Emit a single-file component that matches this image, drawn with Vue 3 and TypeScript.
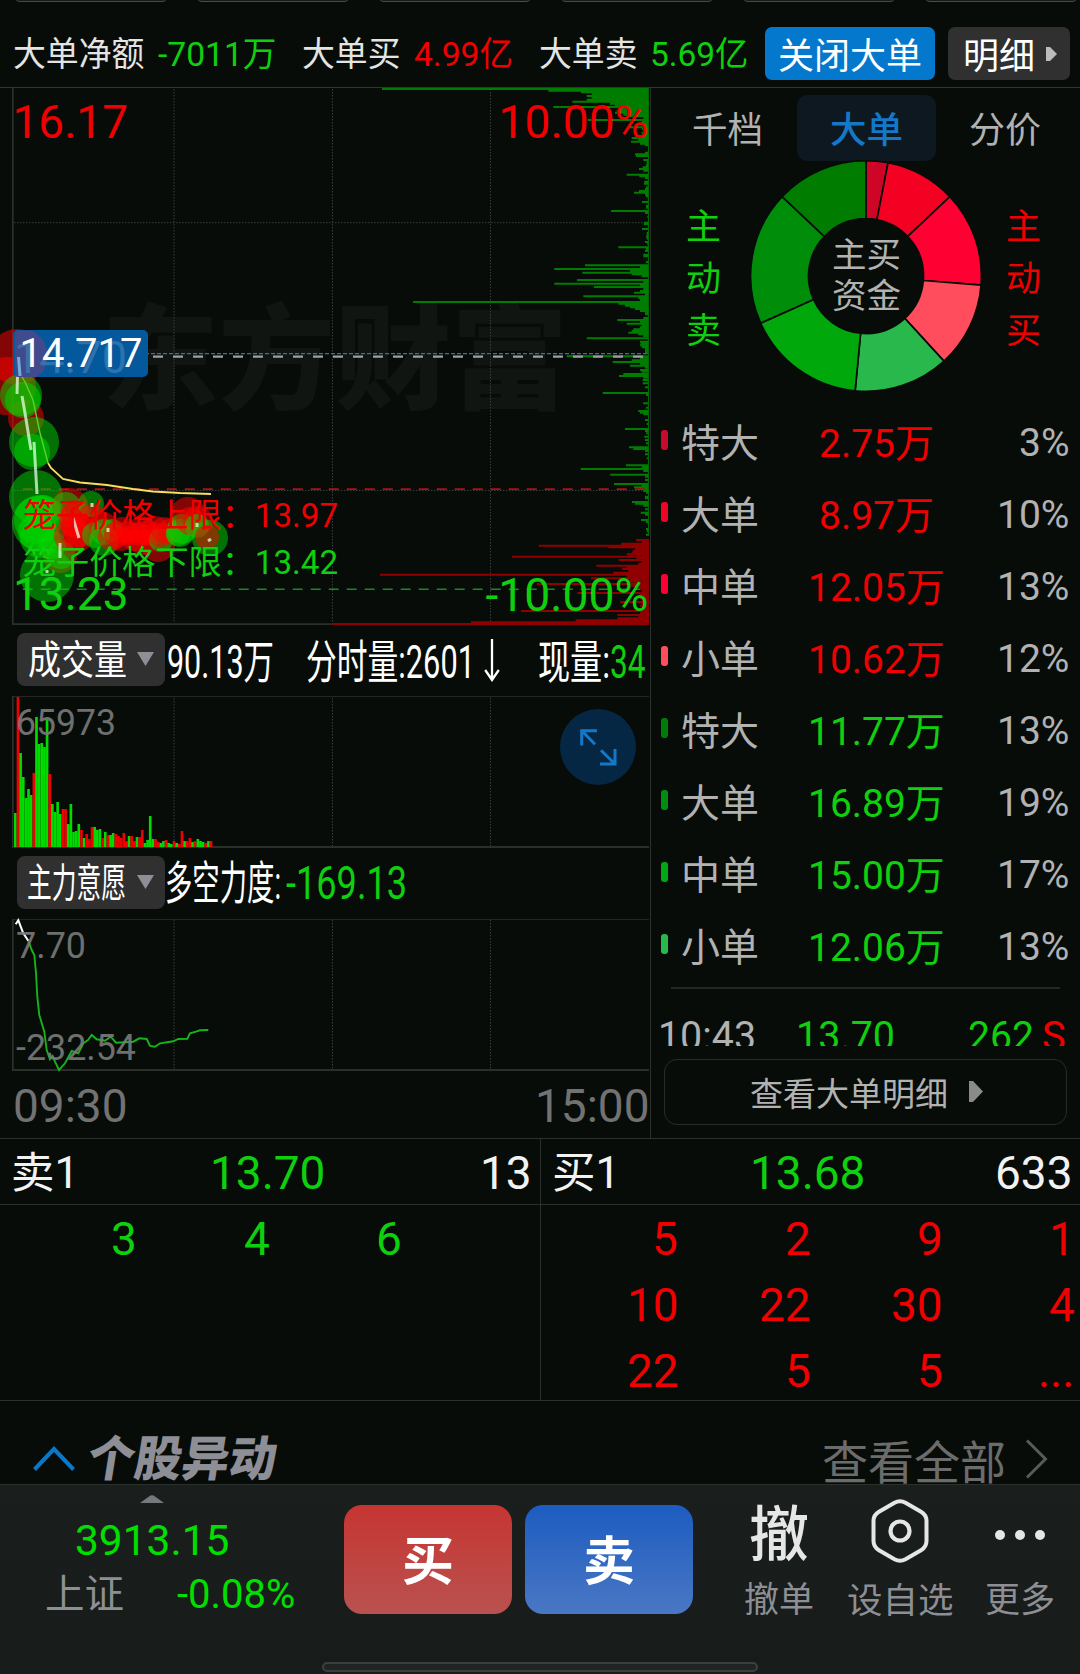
<script setup lang="ts">
import { h, type FunctionalComponent } from 'vue'

interface LabelProps { t: string; s: number; w?: number; c?: string; b?: number }

const ADVANCE: Record<string, number> = { '.': 0.263, ':': 0.242, '%': 0.733, '-': 0.276, S: 0.593 }

function advance(text: string): number {
  let sum = 0
  for (const ch of text) {
    if (ch >= '0' && ch <= '9') sum += 0.5615
    else sum += ADVANCE[ch] ?? 1
  }
  return sum
}

// One line of text whose box ends at the baseline and whose run is fitted to a fixed width.
const Label: FunctionalComponent<LabelProps> = (p) => {
  const width = p.w ?? advance(p.t) * p.s
  return h('svg', { width, height: p.s, style: 'overflow:visible;display:block;flex:none' }, [
    h('text', {
      x: 0, y: p.s, 'font-size': p.s, fill: p.c ?? '#e4e4e4', 'font-weight': p.b ?? 400,
      textLength: width, lengthAdjust: 'spacingAndGlyphs',
    }, p.t),
  ])
}
Label.props = ['t', 's', 'w', 'c', 'b']

const RED = '#f00000'
const GREEN = '#0fd00f'
const GREY = '#b2b2b2'

type Pair = [number, number]
// [y, left edge] of the order-book depth bars; every bar ends at x = 649
const third = (list: number[], oy: number): Pair[] => {
  const out: Pair[] = []
  for (let i = 0; i < list.length; i += 2) out.push([oy + list[i] / 3, 330 + list[i + 1] / 3])
  return out
}
const sellDepth: Pair[] = [
  ...third([27, 156, 32, 655, 37, 753, 42, 785, 48, 770, 53, 785, 59, 770, 65, 727, 71, 840, 76, 855, 81, 670, 87, 870, 93, 860, 98, 855, 104, 880, 109, 900, 114, 940, 120, 773, 125, 935, 131, 930, 136, 945, 142, 900, 147, 935, 153, 940, 158, 935, 164, 938, 169, 915, 174, 905, 180, 925, 185, 903, 191, 930, 196, 945, 218, 945, 223, 915, 228, 918, 240, 940, 245, 950, 251, 950, 256, 948, 262, 938, 267, 927, 272, 940, 284, 890, 289, 928, 294, 945, 305, 943, 311, 942, 322, 948, 327, 945, 333, 927, 338, 912, 344, 945, 349, 948, 366, 936, 377, 948, 383, 948, 393, 843, 399, 945, 410, 952, 428, 942, 432, 942, 447, 936, 458, 950, 464, 950, 470, 948, 476, 950, 486, 945, 492, 952, 502, 865, 508, 948, 513, 945, 524, 940, 529, 940, 546, 948, 556, 765, 562, 930, 567, 673, 573, 900, 578, 757, 583, 905, 589, 935, 600, 741, 606, 940, 611, 673, 616, 930, 621, 792, 627, 940, 633, 930, 638, 912, 644, 945, 649, 760, 655, 925, 660, 930, 666, 249, 671, 865, 677, 885, 682, 900, 687, 915, 693, 930, 698, 945, 703, 945, 714, 940, 720, 862, 726, 930, 731, 890, 737, 935, 742, 930, 748, 910, 753, 905, 758, 895, 763, 925, 768, 940, 775, 770, 785, 930, 790, 932, 796, 930, 802, 935, 808, 945, 813, 945, 819, 945, 829, 710], 80),
  ...third([25, 930, 31, 905, 36, 848, 42, 930, 47, 900, 53, 945, 60, 930, 65, 935, 72, 880, 78, 867, 83, 940, 90, 938, 100, 938, 112, 945, 129, 818, 135, 948, 160, 940, 173, 948, 183, 925, 188, 930, 193, 940, 210, 945, 222, 950, 237, 885, 243, 945, 250, 948, 260, 943, 270, 945, 280, 948, 292, 897, 297, 910, 303, 945, 313, 945, 325, 950, 346, 888, 351, 935, 357, 752, 363, 940, 374, 841, 380, 945, 390, 945, 402, 852, 407, 935, 412, 912, 417, 930, 423, 940, 428, 948, 440, 945, 445, 945, 456, 906, 461, 915, 467, 940, 478, 945, 488, 932, 494, 945, 510, 933, 516, 948, 537, 948, 543, 950, 554, 948], 350),
]
const buyDepth = third([570, 918, 581, 873, 587, 626, 592, 835, 597, 915, 603, 908, 608, 905, 613, 890, 620, 546, 625, 920, 630, 866, 636, 935, 641, 925, 647, 799, 652, 890, 657, 876, 663, 895, 668, 850, 674, 150, 679, 890, 685, 783, 690, 900, 695, 890, 702, 620, 707, 900, 712, 920, 718, 930, 729, 742, 735, 930, 740, 935, 745, 930, 756, 870, 762, 935, 767, 930, 783, 573, 789, 930, 795, 862, 800, 925, 805, 862, 811, 737, 817, 423, 822, 7], 350)
const depthPath = (list: Pair[]) => list.map(([y, x]) => `M${x.toFixed(1)} ${y.toFixed(1)}H649`).join('')

// Large-order bubbles: cx, cy, r, side
const bubbles: [number, number, number, string][] = [
  [17, 357, 28, 'r'], [7, 386, 29, 'r'], [26, 418, 18, 'r'], [21, 395, 21, 'g'], [23, 400, 18, 'g'],
  [34, 442, 25, 'g'], [32, 452, 18, 'g'], [36, 497, 27, 'g'], [60, 556, 17, 'r'], [40, 523, 28, 'g'], [38, 520, 24, 'g'],
  [40, 538, 20, 'g'], [43, 512, 17, 'g'], [36, 532, 18, 'g'], [47, 575, 27, 'g'], [61, 555, 14, 'g'],
  [52, 545, 14, 'g'], [70, 506, 18, 'r'], [66, 507, 15, 'g'], [71, 536, 17, 'r'], [77, 520, 18, 'r'],
  [80, 531, 16, 'r'], [75, 514, 14, 'r'], [78, 537, 15, 'r'], [73, 525, 12, 'r'], [91, 504, 13, 'g'], [92, 518, 14, 'r'],
  [95, 535, 13, 'g'], [104, 541, 15, 'g'], [103, 526, 14, 'r'], [104, 532, 13, 'g'], [112, 537, 14, 'r'], [112, 530, 11, 'g'],
  [121, 539, 12, 'r'], [122, 530, 13, 'r'], [117, 534, 13, 'r'], [128, 533, 12, 'r'], [135, 537, 14, 'r'], [142, 530, 14, 'r'],
  [143, 540, 15, 'r'], [138, 534, 12, 'r'], [148, 533, 13, 'r'], [155, 530, 14, 'r'], [158, 545, 17, 'r'], [161, 540, 12, 'g'],
  [164, 530, 13, 'r'], [160, 535, 12, 'r'], [171, 531, 13, 'r'], [188, 515, 18, 'r'], [180, 533, 14, 'g'], [182, 529, 15, 'g'],
  [178, 534, 12, 'g'], [190, 521, 14, 'r'], [198, 521, 15, 'r'], [197, 526, 12, 'g'], [210, 538, 18, 'g'], [207, 537, 12, 'r'],
]

// Minute volume: side + height, bars 2.64 px apart
const volume = 'g34 r150 g94 g70 g49 g58 g52 r74 g130 g103 g104 g100 g127 r73 g43 g35 g45 g33 r38 r38 g23 g43 g15 g16 g23 r17 g9 r13 r8 r20 g20 g17 g18 r9 g15 r12 g12 g14 r13 r11 r9 r14 r6 g11 r11 r6 g10 r10 r17 g4 g7 g31 g8 r8 r5 g4 g6 r7 g4 g3 r6 g4 r3 r16 g6 r6 r9 g5 r6 g8 g6 g5 r4 g6 r6'
  .split(' ').map((v, i) => ({ x: 14 + i * 2.645, up: v[0] === 'r', n: Number(v.slice(1)) }))

const slices: [number, number, string][] = [
  [0, 11, '#cf0528'], [11, 46.6, '#f40022'], [46.6, 94.5, '#ff0033'], [94.5, 137.5, '#ff4d5e'],
  [137.5, 185.4, '#28b84c'], [185.4, 245.9, '#00a80c'], [245.9, 313.4, '#008e0a'], [313.4, 360, '#007d00'],
]
const polar = (a: number, r: number) => {
  const t = (a * Math.PI) / 180
  return `${(116 + r * Math.sin(t)).toFixed(2)} ${(116 - r * Math.cos(t)).toFixed(2)}`
}
const slicePath = (a: number, b: number) =>
  `M${polar(a, 57.5)}L${polar(a, 115.4)}A115.4 115.4 0 0 1 ${polar(b, 115.4)}L${polar(b, 57.5)}A57.5 57.5 0 0 0 ${polar(a, 57.5)}Z`

const orders = [
  { n: '特大', v: '2.75万', p: '3%', m: '#c90a2c', c: RED },
  { n: '大单', v: '8.97万', p: '10%', m: '#f00525', c: RED },
  { n: '中单', v: '12.05万', p: '13%', m: '#ff0033', c: RED },
  { n: '小单', v: '10.62万', p: '12%', m: '#ff4d5e', c: RED },
  { n: '特大', v: '11.77万', p: '13%', m: '#007d08', c: GREEN },
  { n: '大单', v: '16.89万', p: '19%', m: '#008e12', c: GREEN },
  { n: '中单', v: '15.00万', p: '17%', m: '#00a814', c: GREEN },
  { n: '小单', v: '12.06万', p: '13%', m: '#28b84c', c: GREEN },
]
const quotes = [
  { name: '卖1', price: '13.70', qty: '13', c: GREEN, rows: [['3', '4', '6', '']] },
  { name: '买1', price: '13.68', qty: '633', c: RED, rows: [['5', '2', '9', '1'], ['10', '22', '30', '4'], ['22', '5', '5', '...']] },
]
const grid = [174, 332.5, 490.5]
</script>

<template>
  <div class="app">
    <div class="pills"><i v-for="n in 6" :key="n"></i></div>

    <header class="summary">
      <Label t="大单净额" :s="34" :w="131.5" />
      <Label class="near" t="-7011万" :s="34" :w="118.5" :c="GREEN" />
      <Label class="far" t="大单买" :s="34" :w="98.5" />
      <Label class="near" t="4.99亿" :s="34" :w="99" :c="RED" />
      <Label class="far" t="大单卖" :s="34" :w="98.5" />
      <Label class="near" t="5.69亿" :s="34" :w="98.5" :c="GREEN" />
      <button class="btn close"><Label t="关闭大单" :s="36" :w="144" c="#fff" /></button>
      <button class="btn detail">
        <Label t="明细" :s="36" :w="72" c="#fff" />
        <svg width="11" height="14" class="tri"><path d="M0 0L4 0L11 7L4 14H0Z" fill="#bcbcbc" /></svg>
      </button>
    </header>

    <main class="body">
      <section class="charts">
        <svg class="plot" width="650" height="538" viewBox="0 88 650 538">
          <text x="102" y="400" font-size="114" font-weight="900" fill="#101511" textLength="466" lengthAdjust="spacingAndGlyphs">东方财富</text>
          <path :d="grid.map((x) => `M${x} 89V623`).join('') + 'M14 222.7H648M14 490.5H648'" class="dots" />
          <path d="M12.8 88V624.2H649" class="axis" />
          <path :d="depthPath(sellDepth)" stroke="#007c00" stroke-width="2" />
          <path d="M648.5 88V536" stroke="#006a05" />
          <path d="M642 541H649V624H642Z" fill="#900000" />
          <path :d="depthPath(buyDepth)" stroke="#900000" stroke-width="2" />
          <path d="M13 353.6H648" stroke="#3a6f9e" stroke-width="1.2" stroke-dasharray="4 2" />
          <path d="M153 356.6H644" stroke="#a0a0a0" stroke-width="2.4" stroke-dasharray="10 10" />
          <path d="M22.7 489.2H648" stroke="#b01010" stroke-width="1.8" stroke-dasharray="10 8" />
          <path d="M22.7 589.3H640" stroke="#138c20" stroke-width="1.6" stroke-dasharray="10 8" />
          <circle v-for="(b, i) in bubbles" :key="i" :cx="b[0]" :cy="b[1]" :r="b[2]" :fill="b[3] === 'r' ? '#ff0000' : '#00d800'" fill-opacity=".5" />
          <path d="M18 357L17 394M22 396L25 413L31 450M34 442L37 494M60 543V558M47 570V573M73 518L79 538M92 503V507M108 528V532M197 523V527M208 541L211 539" class="price" />
          <path d="M19 372L25 382L33 400L40 433L48 463" stroke="#5ad22c" stroke-width="1.4" fill="none" />
          <path d="M48 463L51 468L63 479L80 482.5L107 485L133 489L153 491.5L180 493L211 494" stroke="#f5df5c" stroke-width="1.8" fill="none" />
          <text x="23" y="526.5" font-size="33" fill="#f00000" textLength="315" lengthAdjust="spacingAndGlyphs">笼子价格上限：13.97</text>
          <text x="23" y="574" font-size="33" :fill="GREEN" textLength="315" lengthAdjust="spacingAndGlyphs">笼子价格下限：13.42</text>
          <text x="12.500" y="138.3" font-size="46.500" :fill="RED" textLength="115.500" lengthAdjust="spacingAndGlyphs">16.17</text>
          <text x="498.500" y="138.3" font-size="46.500" :fill="RED" textLength="150" lengthAdjust="spacingAndGlyphs">10.00%</text>
          <text x="13" y="610" font-size="46.500" :fill="GREEN" textLength="115.500" lengthAdjust="spacingAndGlyphs">13.23</text>
          <text x="485.500" y="611" font-size="46.500" :fill="GREEN" textLength="163" lengthAdjust="spacingAndGlyphs">-10.00%</text>
          <rect x="13" y="330" width="135" height="47" rx="5" fill="#04589c" />
          <path d="M15 330.5H32A28 28 0 0 1 41 374L36 377H15Z" fill="#7a3d7c" opacity=".5" />
          <text x="14" y="373" font-size="45" fill="#4082b8" opacity=".65">14.70</text>
          <path d="M18.5 357L20 376" stroke="#71aedd" stroke-width="3" />
          <text x="19.500" y="366.8" font-size="40" fill="#fff">14.717</text>
        </svg>

        <div class="tools vol">
          <div class="chip"><Label t="成交量" :s="40" :w="99" c="#fff" /><svg width="17" height="14" class="tri"><path d="M0 0H17L8.500 14Z" fill="#8c8f96" /></svg></div>
          <Label class="m3" t="90.13万" :s="46" :w="107" c="#fff" />
          <Label class="m32" t="分时量:2601" :s="46" :w="169" c="#fff" />
          <svg class="down" width="16" height="43"><path d="M8 0V41M1.200 31L8 41L14.800 31" stroke="#fff" stroke-width="2.300" fill="none" /></svg>
          <Label class="m38" t="现量:" :s="46" :w="72" c="#fff" />
          <Label t="34" :s="46" :w="35.500" :c="GREEN" />
        </div>

        <svg class="plot" width="650" height="153" viewBox="0 696 650 153">
          <path :d="grid.map((x) => `M${x} 698V846`).join('')" class="dots" />
          <path d="M12 696.600H649" class="thin" /><path d="M12.800 696V847H649" class="axis" />
          <rect v-for="(b, i) in volume" :key="i" :x="b.x" :y="847 - b.n" width="2.650" :height="b.n" :fill="b.up ? '#f00000' : '#00dc00'" />
          <text x="16" y="735" font-size="36.500" fill="#7a7a7a" opacity=".9" textLength="100" lengthAdjust="spacingAndGlyphs">65973</text>
          <circle cx="598" cy="747" r="38" fill="#062744" />
          <path d="M597 730.700H581.700V745.500M582.500 731.500L595 744.300M600 764H615V749M601 750.200L614 763" stroke="#1478c8" stroke-width="3" fill="none" />
        </svg>

        <div class="tools power">
          <div class="chip"><Label t="主力意愿" :s="40" :w="99" c="#fff" /><svg width="17" height="14" class="tri"><path d="M0 0H17L8.500 14Z" fill="#8c8f96" /></svg></div>
          <Label class="m1" t="多空力度:" :s="46" :w="116" c="#fff" />
          <Label class="m4" t="-169.13" :s="46" :w="121" :c="GREEN" />
        </div>

        <svg class="plot" width="650" height="154" viewBox="0 918 650 154">
          <path :d="grid.map((x) => `M${x} 920V1069`).join('')" class="dots" />
          <path d="M12 919.400H649" class="thin" /><path d="M12.800 919V1070H649" class="axis" />
          <path d="M28.300 940.700L31.700 950L34.300 955L36 973L37.300 996.700L39.300 1015L44.300 1031.700L46.700 1050L50 1059.300L52.700 1056L55 1061.700L59 1070L65 1063.300L71.700 1051L78.300 1053.300L83.300 1043.300L88 1040L91.700 1035L96.700 1039.300L105 1040.700L110.700 1036.700L116 1042.700L133.300 1041.700L139.300 1038.300L146.700 1039L150 1046L155 1046.700L160 1043.300L173.300 1041.300L178.300 1039L187.300 1038.700L190 1033.300L196 1031.700L200 1030.300L208.300 1030" stroke="#14b41a" stroke-width="1.900" fill="none" />
          <path d="M15.700 924.300L18.300 920.300L23.300 933.300L28.300 940.700" stroke="#fff" stroke-width="2" fill="none" />
          <text x="16" y="957.700" font-size="36.500" fill="#7a7a7a" opacity=".9" textLength="70" lengthAdjust="spacingAndGlyphs">7.70</text>
          <text x="16" y="1059.700" font-size="36.500" fill="#7a7a7a" opacity=".9" textLength="120" lengthAdjust="spacingAndGlyphs">-232.54</text>
        </svg>

        <div class="times">
          <Label t="09:30" :s="46.5" :w="114.5" c="#727272" />
          <Label t="15:00" :s="46.5" :w="114.5" c="#727272" />
        </div>
      </section>

      <aside class="side">
        <nav class="tabs">
          <span><Label t="千档" :s="36" :w="71" :c="GREY" /></span>
          <span class="on"><Label t="大单" :s="36" :w="73" c="#1478c8" :b="500" /></span>
          <span><Label t="分价" :s="36" :w="72" :c="GREY" /></span>
        </nav>
        <div class="donut">
          <div class="vert"><Label v-for="c in '主动卖'" :key="c" :t="c" :s="35" :c="GREEN" /></div>
          <div class="ring">
            <svg width="232" height="232">
              <path v-for="s in slices" :key="s[0]" :d="slicePath(s[0], s[1])" :fill="s[2]" stroke="#070c08" stroke-width="1.700" />
            </svg>
            <div class="hub"><Label t="主买" :s="34.5" :c="GREY" /><Label t="资金" :s="34.5" :c="GREY" /></div>
          </div>
          <div class="vert"><Label v-for="c in '主动买'" :key="c" :t="c" :s="35" :c="RED" /></div>
        </div>
        <ul class="orders">
          <li v-for="(o, i) in orders" :key="i">
            <i :style="{ background: o.m }"></i>
            <Label class="name" :t="o.n" :s="39" :c="GREY" />
            <span class="val"><Label :t="o.v" :s="39" :c="o.c" /></span>
            <Label class="pct" :t="o.p" :s="39" :c="GREY" />
          </li>
        </ul>
        <div class="rule"></div>
        <div class="trade">
          <Label t="10:43" :s="40" :w="98" :c="GREY" />
          <Label class="tp" t="13.70" :s="40" :w="99" :c="GREEN" />
          <Label class="tq" t="262" :s="40" :w="66" :c="GREEN" />
          <Label class="ts" t="S" :s="40" :c="RED" />
        </div>
        <button class="more">
          <Label t="查看大单明细" :s="33" :w="198" :c="GREY" />
          <svg width="14" height="21" class="tri"><path d="M0 0H4L14 10.500L4 21H0Z" fill="#8a8a8a" /></svg>
        </button>
      </aside>
    </main>

    <section class="quotes">
      <div v-for="q in quotes" :key="q.name" class="half">
        <div class="best">
          <Label :t="q.name" :s="43.5" c="#f2f2f2" />
          <Label class="mid" :t="q.price" :s="46" :c="GREEN" />
          <Label class="qty" :t="q.qty" :s="46" c="#f2f2f2" />
        </div>
        <div v-for="(r, i) in q.rows" :key="i" class="lots">
          <span v-for="(n, j) in r" :key="j"><Label v-if="n" :t="n" :s="46" :c="q.c" /></span>
        </div>
      </div>
    </section>

    <section class="news">
      <svg width="42" height="26" class="up"><path d="M1.500 24.500L21 4L40.500 24.500" stroke="#0a78c8" stroke-width="4" fill="none" /></svg>
      <Label class="title" t="个股异动" :s="48.5" :w="189" c="#8e8e96" :b="900" />
      <Label class="all" t="查看全部" :s="46" :w="184" c="#6c6c6c" />
      <svg width="24" height="40" class="next"><path d="M2 1.500L20.500 20L2 38.500" stroke="#5a5a5a" stroke-width="3" fill="none" /></svg>
    </section>

    <footer class="dock">
      <div class="index">
        <svg width="24" height="8"><path d="M0 8L9 1.500Q12 -1 15 1.500L24 8Z" fill="#77777e" /></svg>
        <Label class="point" t="3913.15" :s="42.5" c="#00e000" />
        <div class="line">
          <Label t="上证" :s="39.5" c="#8e8f95" />
          <Label t="-0.08%" :s="40" c="#00e000" />
        </div>
      </div>
      <button class="deal buy"><Label t="买" :s="52" c="#fff" :b="700" /></button>
      <button class="deal sell"><Label t="卖" :s="52" c="#fff" :b="700" /></button>
      <div class="act a1"><div class="ico"><Label t="撤" :s="60" c="#e6e6e6" :b="500" /></div><Label t="撤单" :s="35" c="#8e8f95" /></div>
      <div class="act a2">
        <div class="ico"><svg width="62" height="66"><path d="M25.500 4.800Q31 1.800 36.500 4.800L52 13.800Q57.500 17 57.500 23V43Q57.500 49 52 52.200L36.500 61.200Q31 64.200 25.500 61.200L10 52.200Q4.500 49 4.500 43V23Q4.500 17 10 13.800Z" stroke="#e6e6e6" stroke-width="4" fill="none" /><circle cx="31" cy="33" r="9.500" stroke="#e6e6e6" stroke-width="4.200" fill="none" /></svg></div>
        <Label t="设自选" :s="35.5" c="#8e8f95" />
      </div>
      <div class="act a3">
        <div class="ico"><svg width="52" height="66"><circle v-for="x in [6, 26, 46]" :key="x" :cx="x" cy="37" r="5" fill="#e6e6e6" /></svg></div>
        <Label t="更多" :s="35" c="#8e8f95" />
      </div>
      <div class="home"></div>
    </footer>
  </div>
</template>

<style>
body { background: #070c08; }
</style>

<style scoped>
* { box-sizing: border-box; }
.app { width: 1080px; height: 1674px; background: #070c08; overflow: hidden; font-family: Roboto, "Noto Sans CJK SC", sans-serif; display: flex; flex-direction: column; }
svg { display: block; flex: none; }
button { border: 0; padding: 0; font: inherit; background: none; flex: none; }
.pills { height: 2px; flex: none; display: flex; gap: 28px; padding-left: 14px; overflow: hidden; align-items: flex-end; }
.pills i { width: 154px; height: 20px; flex: none; border: 1.500px solid #4a4a4a; border-radius: 6px; background: #161a17; }
.summary { height: 86px; flex: none; border-bottom: 1px solid #333634; display: flex; align-items: flex-end; padding: 0 0 21px 13px; }
.near { margin-left: 13px; }
.far { margin-left: 26px; }
.btn { display: flex; align-items: flex-end; height: 53px; border-radius: 7px; padding-bottom: 11px; margin-bottom: -13.500px; }
.close { width: 170px; background: #0478cd; justify-content: center; margin-left: 16.500px; }
.detail { width: 122px; background: #303030; margin-left: 13px; padding-left: 14.500px; }
.detail .tri { margin: 0 0 8px 11px; }
.body { display: flex; height: 1050px; flex: none; }
.charts { width: 650px; flex: none; display: flex; flex-direction: column; }
.dots { stroke: #3a3e3b; stroke-width: 1; stroke-dasharray: 1.500 1.500; fill: none; }
.axis { stroke: #2b2f2c; stroke-width: 1.800; fill: none; }
.thin { stroke: #262a27; stroke-width: 1; }
.price { stroke: #e4ffe4; stroke-width: 3; fill: none; opacity: .75; }
.tools { display: flex; align-items: flex-end; padding-left: 16.500px; flex: none; }
.vol { height: 70px; padding-bottom: 18.500px; }
.power { height: 69px; padding-bottom: 19.500px; }
.chip { width: 148px; height: 53px; flex: none; background: #303030; border-radius: 8px; display: flex; align-items: flex-end; padding: 0 0 12px 11px; margin-bottom: -8.500px; }
.power .chip { margin-bottom: -10px; padding-left: 10.500px; }
.chip .tri { margin: 0 0 8px 10.500px; }
.m3 { margin-left: 2.500px; }
.m32 { margin-left: 32px; }
.m38 { margin-left: 38px; }
.m1 { margin-left: 0.500px; }
.m4 { margin-left: 4.500px; }
.down { margin: 0 0 -4px 9px; }
.times { display: flex; justify-content: space-between; align-items: flex-end; height: 66px; padding: 0 1px 16.500px 12.500px; flex: none; }
.side { width: 430px; flex: none; border-left: 1px solid #2c302d; display: flex; flex-direction: column; }
.tabs { display: flex; padding: 7px 0 0 6.500px; height: 73px; flex: none; }
.tabs span { width: 139px; height: 66px; display: flex; align-items: flex-end; justify-content: center; padding-bottom: 18px; flex: none; }
.tabs .on { background: #0d1820; border-radius: 10px; }
.donut { display: flex; height: 247px; flex: none; padding-left: 34.500px; }
.vert { display: flex; flex-direction: column; gap: 17px; padding-top: 42.500px; }
.ring { width: 232px; height: 232px; margin: -1.300px 24.500px 0 29px; flex: none; display: grid; }
.ring > * { grid-area: 1 / 1; }
.hub { display: flex; flex-direction: column; align-items: center; gap: 6px; padding: 72.500px 0 0 1px; }
.orders { list-style: none; margin: 0; padding: 0 10.500px 0 10px; flex: none; }
.orders li { height: 72px; display: flex; align-items: flex-end; padding-bottom: 23px; }
.orders i { width: 7px; height: 20px; border-radius: 3px; margin-bottom: 7px; flex: none; }
.name { margin-left: 13px; }
.val { width: 140px; margin-left: 47px; display: flex; justify-content: center; flex: none; }
.pct { margin: 0 0 1.500px auto; }
.rule { height: 2px; background: #242825; margin: 3px 20px 0; flex: none; }
.trade { height: 57px; padding: 20.500px 0 0 7px; display: flex; overflow: hidden; flex: none; }
.tp { margin-left: 40px; }
.tq { margin-left: 72.500px; }
.ts { margin-left: 8.500px; }
.more { width: 403px; height: 66px; margin: 13px 0 0 13px; border: 1.500px solid #282c29; border-radius: 13px; display: flex; align-items: flex-end; padding: 0 0 18px 85px; }
.more .tri { margin: 0 0 4px 20.500px; }
.quotes { height: 263px; flex: none; display: flex; border-top: 1px solid #2c302d; border-bottom: 1px solid #2c302d; }
.half { width: 540px; flex: none; }
.half + .half { border-left: 1px solid #2c302d; }
.best { display: flex; align-items: flex-end; height: 66px; border-bottom: 1px solid #2c302d; padding: 0 8px 15px 10.500px; }
.best > :first-child { margin-bottom: 1.500px; }
.mid { margin-left: 132px; }
.half + .half .mid { margin-left: 131px; }
.qty { margin-left: auto; }
.lots { display: flex; height: 66px; padding: 0 0 16px 5px; align-items: flex-end; }
.lots span { width: 132.200px; display: flex; justify-content: flex-end; flex: none; }
.news { height: 83px; flex: none; display: flex; align-items: flex-end; padding: 0 31px 5px 33px; overflow: hidden; }
.up { margin-bottom: 8px; }
.title { transform: skewX(-9deg); margin: 0 0 3px 14px; }
.all { margin-left: auto; }
.next { margin: 0 0 0 19px; }
.dock { position: relative; height: 190px; flex: none; background: linear-gradient(#1a1e1c, #171b19); border-top: 1px solid #2c302d; display: flex; align-items: flex-start; }
.index { width: 252px; margin-left: 45px; padding-top: 10px; flex: none; display: flex; flex-direction: column; }
.index > svg:first-child { margin-left: 95px; }
.point { margin: 8.500px 0 0 30px; }
.line { display: flex; justify-content: space-between; margin-top: 13.500px; padding-right: 2px; align-items: flex-end; }
.deal { width: 168px; height: 109px; border-radius: 18px; margin: 20px 0 0 47px; display: flex; justify-content: center; align-items: flex-end; padding-bottom: 34px; }
.buy { background: linear-gradient(#c63532, #b9524f); }
.sell { background: linear-gradient(#1c5cc0, #4a77c4); margin-left: 13px; }
.act { display: flex; flex-direction: column; align-items: center; flex: none; padding-top: 13px; }
.ico { height: 66px; display: flex; align-items: flex-end; margin-bottom: 13px; }
.a1 { margin-left: 51px; }
.a1 .ico { padding-bottom: 8px; }
.a2 { margin-left: 33px; }
.a3 { margin-left: 31px; }
.home { position: absolute; left: 322px; bottom: 2px; width: 436px; height: 10px; border: 2px solid #3c403d; border-radius: 5px; background: #202422; }
</style>
